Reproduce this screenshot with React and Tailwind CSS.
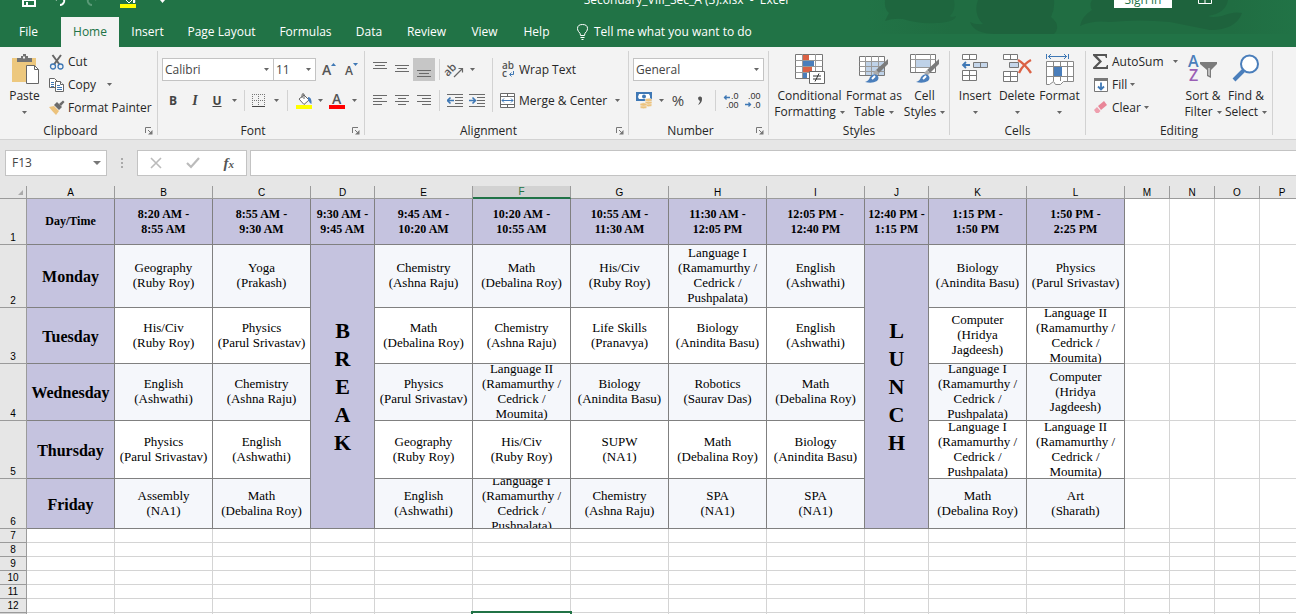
import React, { useState } from 'react';

const TABS = [
  { name: 'File', width: 'w-[61px] pr-1' },
  { name: 'Home', width: 'w-[58px]' },
  { name: 'Insert', width: 'w-[57px]' },
  { name: 'Page Layout', width: 'w-[91px]' },
  { name: 'Formulas', width: 'w-[77px]' },
  { name: 'Data', width: 'w-[50px]' },
  { name: 'Review', width: 'w-[65px]' },
  { name: 'View', width: 'w-[51px]' },
  { name: 'Help', width: 'w-[53px]' },
];

const COLUMNS = [
  { name: 'A', width: 'w-[88px]' },
  { name: 'B', width: 'w-[98px]' },
  { name: 'C', width: 'w-[98px]' },
  { name: 'D', width: 'w-[64px]' },
  { name: 'E', width: 'w-[98px]' },
  { name: 'F', width: 'w-[98px]' },
  { name: 'G', width: 'w-[98px]' },
  { name: 'H', width: 'w-[98px]' },
  { name: 'I', width: 'w-[98px]' },
  { name: 'J', width: 'w-[64px]' },
  { name: 'K', width: 'w-[98px]' },
  { name: 'L', width: 'w-[98px]' },
  { name: 'M', width: 'w-[45px]' },
  { name: 'N', width: 'w-[45px]' },
  { name: 'O', width: 'w-[45px]' },
  { name: 'P', width: 'w-[45px]' },
];

const TIMES = [
  '8:20 AM -\n8:55 AM', '8:55 AM -\n9:30 AM', '9:30 AM -\n9:45 AM', '9:45 AM -\n10:20 AM',
  '10:20 AM -\n10:55 AM', '10:55 AM -\n11:30 AM', '11:30 AM -\n12:05 PM', '12:05 PM -\n12:40 PM',
  '12:40 PM -\n1:15 PM', '1:15 PM -\n1:50 PM', '1:50 PM -\n2:25 PM',
];

const LANG1 = 'Language I\n(Ramamurthy /\nCedrick /\nPushpalata)';
const LANG2 = 'Language II\n(Ramamurthy /\nCedrick /\nMoumita)';
const COMPUTER = 'Computer\n(Hridya\nJagdeesh)';

// morning = B-C, middle = E-I, afternoon = K-L
const DAYS = [
  {
    name: 'Monday', height: 'h-[62px]', color: 'bg-[#f5f7fb]',
    morning: ['Geography\n(Ruby Roy)', 'Yoga\n(Prakash)'],
    middle: ['Chemistry\n(Ashna Raju)', 'Math\n(Debalina Roy)', 'His/Civ\n(Ruby Roy)', LANG1, 'English\n(Ashwathi)'],
    afternoon: ['Biology\n(Anindita Basu)', 'Physics\n(Parul Srivastav)'],
  },
  {
    name: 'Tuesday', height: 'h-[55px]', color: 'bg-white',
    morning: ['His/Civ\n(Ruby Roy)', 'Physics\n(Parul Srivastav)'],
    middle: ['Math\n(Debalina Roy)', 'Chemistry\n(Ashna Raju)', 'Life Skills\n(Pranavya)', 'Biology\n(Anindita Basu)', 'English\n(Ashwathi)'],
    afternoon: [COMPUTER, LANG2],
  },
  {
    name: 'Wednesday', height: 'h-[56px]', color: 'bg-[#f5f7fb]',
    morning: ['English\n(Ashwathi)', 'Chemistry\n(Ashna Raju)'],
    middle: ['Physics\n(Parul Srivastav)', LANG2, 'Biology\n(Anindita Basu)', 'Robotics\n(Saurav Das)', 'Math\n(Debalina Roy)'],
    afternoon: [LANG1, COMPUTER],
  },
  {
    name: 'Thursday', height: 'h-[57px]', color: 'bg-white',
    morning: ['Physics\n(Parul Srivastav)', 'English\n(Ashwathi)'],
    middle: ['Geography\n(Ruby Roy)', 'His/Civ\n(Ruby Roy)', 'SUPW\n(NA1)', 'Math\n(Debalina Roy)', 'Biology\n(Anindita Basu)'],
    afternoon: [LANG1, LANG2],
  },
  {
    name: 'Friday', height: 'h-[49px]', color: 'bg-[#f5f7fb]',
    morning: ['Assembly\n(NA1)', 'Math\n(Debalina Roy)'],
    middle: ['English\n(Ashwathi)', LANG1, 'Chemistry\n(Ashna Raju)', 'SPA\n(NA1)', 'SPA\n(NA1)'],
    afternoon: ['Math\n(Debalina Roy)', 'Art\n(Sharath)'],
  },
];

const EMPTY_ROWS = [7, 8, 9, 10, 11, 12, 13];

/* ---------- small ribbon parts ---------- */

const Caret = () => (
  <svg className="w-[5px] h-[3px] shrink-0" viewBox="0 0 5 3"><path d="M0 0h5L2.5 3z" fill="#666" /></svg>
);

const CaretButton = ({ label, className = 'w-[14px]' }) => (
  <button aria-label={label} className={`h-6 shrink-0 flex items-center justify-center ${className}`}><Caret /></button>
);

const IconButton = ({ label, className = 'w-[22px]', children }) => (
  <button aria-label={label} className={`h-6 shrink-0 flex items-center justify-center ${className}`}>{children}</button>
);

const Divider = ({ className = 'h-[21px]' }) => <div className={`w-px shrink-0 bg-[#d2d2d2] ${className}`}></div>;

const Group = ({ label, width, launcher, children }) => (
  <section className={`flex shrink-0 h-[92px] ${width}`}>
    <div className="flex flex-col flex-1 min-w-0">
      <div className="h-[76px]">{children}</div>
      <div className="h-4 flex items-center">
        <span className={`flex-1 text-center leading-4 ${launcher ? 'pr-1' : ''}`}>{label}</span>
        {launcher && (
          <button aria-label={`${label} settings`} className="w-3">
            <svg className="w-2 h-2" viewBox="0 0 8 8" fill="none" stroke="#777">
              <path d="M.5 6V.5H6M3 3l3 3" />
              <path d="M7.5 3v4.5H3z" fill="#777" stroke="none" />
            </svg>
          </button>
        )}
      </div>
    </div>
    <Divider className="h-[84px] mt-1" />
  </section>
);

const BigButton = ({ icon, lines, width, caretBelow }) => (
  <button className={`flex flex-col items-center shrink-0 pt-[7px] leading-4 ${width}`}>
    <span className="h-[34px]">{icon}</span>
    {lines.map((line, i) => (
      <span key={line} className="flex items-center gap-1 whitespace-nowrap">
        {line}{!caretBelow && i === lines.length - 1 && <Caret />}
      </span>
    ))}
    {caretBelow && <span className="h-4 flex items-center"><Caret /></span>}
  </button>
);

const Lines = ({ d, label, active }) => (
  <button aria-label={label} className={`w-[22px] h-[23px] shrink-0 flex items-center justify-center ${active ? 'bg-[#c6c6c6]' : ''}`}>
    <svg className="w-[14px] h-4" viewBox="0 0 14 16" stroke="#6a6a6a" fill="none"><path d={d} /></svg>
  </button>
);

/* ---------- icons ---------- */

const PasteIcon = () => (
  <svg className="w-[30px] h-[31px]" viewBox="0 0 30 31">
    <path d="M2 4h24v24H2z" fill="#edc87e" />
    <path d="M7 4h4V2h2V0h3v2h2v2h4v4H7z" fill="#737373" />
    <path d="M13 2.5h2v2h-2z" fill="#f3f3f3" />
    <path d="M16.500 11.500h8l4 4v14h-12z" fill="#fff" stroke="#666" />
    <path d="M24.500 11.500v4h4" fill="none" stroke="#666" />
  </svg>
);

const CutIcon = () => (
  <svg className="w-4 h-4" viewBox="0 0 16 16" fill="none">
    <path d="M3.500 1l7 9.500M12 1L5 10.500" stroke="#666" strokeWidth="2" />
    <circle cx="4" cy="12.500" r="2.500" stroke="#3f78b5" strokeWidth="1.300" />
    <circle cx="11.500" cy="12.500" r="2.500" stroke="#3f78b5" strokeWidth="1.300" />
  </svg>
);

const CopyIcon = () => (
  <svg className="w-4 h-4" viewBox="0 0 16 16" fill="#fff" stroke="#666">
    <path d="M.5 1.500h5l3 3v6h-8z" />
    <path d="M2 5.500h3M2 7.500h3M2 9.500h3" stroke="#3f78b5" />
    <path d="M6.500 4.500h5l3 3v7h-8z" />
    <path d="M11.500 4.500v3h3" />
    <path d="M8 8.500h3M8 10.500h5M8 12.500h5" stroke="#3f78b5" />
  </svg>
);

const PainterIcon = () => (
  <svg className="w-4 h-4" viewBox="0 0 16 16">
    <path d="M0 7l5-1 5 5-3 4q-4-4-7-8z" fill="#ecc27c" />
    <path d="M5 5l3-3 5 5-3 3z" fill="#6b6b6b" />
    <path d="M10 4l4-3.500 1.500 1.500L12 6z" fill="#6b6b6b" />
  </svg>
);

const BordersIcon = () => (
  <svg className="w-[14px] h-[14px]" viewBox="0 0 14 14" stroke="#777" fill="none">
    <path d="M.5 0v13M6.500 0v13M12.500 0v13M0 .5h13M0 6.500h13" strokeDasharray="1 1" />
    <path d="M0 12.500h13" stroke="#444" />
  </svg>
);

const FillColorIcon = () => (
  <svg className="w-4 h-4" viewBox="0 0 16 16">
    <path d="M3 6l5-4 5 5-5 4.500z" fill="#fff" stroke="#666" />
    <path d="M6 5V2q0-2 2-1v5" fill="none" stroke="#666" />
    <path d="M12 4q4 0 3.500 7-2-1-3.500-4z" fill="#4a7ebb" />
    <path d="M0 12h16v4H0z" fill="#ffff00" />
  </svg>
);

const OrientationIcon = () => (
  <svg className="w-[17px] h-4 overflow-visible" viewBox="0 0 17 16" fill="none">
    <text x="-3" y="10" fontSize="11" fontWeight="600" fill="#555" transform="rotate(-45 5 8)" className="font-['Open_Sans']">ab</text>
    <path d="M7 15l8-8M11.500 6.500H15.500v4" stroke="#666" strokeWidth="1.200" />
  </svg>
);

const WrapIcon = () => (
  <svg className="w-[14px] h-4 overflow-visible" viewBox="0 0 14 16" fill="none">
    <text x="0" y="7" fontSize="10" fontWeight="600" fill="#555" className="font-['Open_Sans']">ab</text>
    <text x="0" y="15" fontSize="10" fontWeight="600" fill="#555" className="font-['Open_Sans']">c</text>
    <path d="M11.500 9v3.500H8M9.500 10.500l-2 2 2 2" stroke="#3f78b5" />
  </svg>
);

const MergeIcon = () => (
  <svg className="w-4 h-4" viewBox="0 0 16 16" fill="#fff" stroke="#6a6a6a">
    <path d="M.5 .5h14v14H.5zM.5 3.500h14M.5 11.500h14M7.500 .5v3M7.500 11.500v3" />
    <path d="M2 7.500h11M4 5.500l-2 2 2 2M11 5.500l2 2-2 2" stroke="#3f78b5" fill="none" />
  </svg>
);

const IndentIcon = ({ right }) => (
  <svg className="w-4 h-4" viewBox="0 0 16 16" fill="none" stroke="#6a6a6a">
    <path d="M0 1.500h16M8 4.500h8M8 7.500h8M8 10.500h8M0 13.500h16" />
    <path d={right ? 'M0 7.500h6M3.500 4.500l3 3-3 3' : 'M7 7.500H1M3.500 4.500l-3 3 3 3'} stroke="#3f78b5" strokeWidth="1.600" />
  </svg>
);

const CurrencyIcon = () => (
  <svg className="w-[17px] h-[17px]" viewBox="0 0 17 17">
    <path d="M0 0h16v9H0z" fill="#3f78b5" />
    <path d="M3 2h10l1 2v2l-1 1H3L2 5z" fill="#fff" />
    <circle cx="8" cy="4.500" r="2" fill="#3f78b5" />
    <g fill="#ecc27c" stroke="#f3f3f3" strokeWidth=".5">
      <ellipse cx="12.500" cy="13" rx="3.500" ry="1.700" />
      <ellipse cx="12.500" cy="10.500" rx="3.500" ry="1.700" />
      <ellipse cx="12.500" cy="8" rx="3.500" ry="1.700" />
      <ellipse cx="7.500" cy="15" rx="3.500" ry="1.700" />
      <ellipse cx="7.500" cy="12.500" rx="3.500" ry="1.700" />
    </g>
  </svg>
);

const DecimalIcon = ({ less }) => (
  <svg className="w-4 h-4 overflow-visible" viewBox="0 0 16 16" fill="none">
    <text x={less ? 3 : 8} y="6" fontSize="9" fill="#333" className="font-['Liberation_Sans']">{less ? '.00' : '.0'}</text>
    <text x={less ? 8 : 3} y="15" fontSize="9" fill="#333" className="font-['Liberation_Sans']">{less ? '.0' : '.00'}</text>
    <path d={less ? 'M0 11.500h6M3.500 9.500l2 2-2 2' : 'M7 4.500H1M3.500 2.500l-2 2 2 2'} stroke="#3f78b5" strokeWidth="1.300" />
  </svg>
);

const ConditionalIcon = () => (
  <svg className="w-[30px] h-[31px]" viewBox="0 0 30 31">
    <path d="M.5 .5h27v24H.5z" fill="#fff" stroke="#777" />
    <path d="M.5 6.500h27M.5 12.500h27M.5 18.500h27M7.500 0v24M20.500 0v24" stroke="#999" fill="none" />
    <path d="M8 1h6v5H8zM8 13h9v5H8z" fill="#db6245" />
    <path d="M8 7h11v5H8zM8 19h4v5H8z" fill="#4a7ebb" />
    <path d="M14.500 17.500h15v12h-15z" fill="#fff" stroke="#666" />
    <path d="M18 22h8M18 25h8M24 19.500l-4 8" stroke="#333" fill="none" />
  </svg>
);

const Brush = () => (
  <g>
    <path d="M29 5v5l-9 9-3-3z" fill="#7b7b7b" />
    <path d="M17 16l3 3-3 3-3-3z" fill="#aaa" />
    <path d="M6 28q4-1 5-5 3-4 7-2 3 3 0 6-5 3-12 1z" fill="#4a7ebb" />
    <path d="M13 25l3-3" stroke="#fff" strokeWidth="2" />
  </g>
);

const FormatTableIcon = () => (
  <svg className="w-[30px] h-[30px]" viewBox="0 0 30 30">
    <path d="M.5 2.500h25v19H.5z" fill="#fff" stroke="#777" />
    <path d="M7 8h18v13H7z" fill="#bfd2e8" />
    <path d="M.5 7.500h25M.5 12.500h25M.5 17.500h25M6.500 2v19M12.500 2v19M19.500 2v19" stroke="#999" fill="none" />
    <Brush />
  </svg>
);

const CellStylesIcon = () => (
  <svg className="w-[30px] h-[30px]" viewBox="0 0 30 30">
    <path d="M.5 .5h25v18H.5z" fill="#fff" stroke="#777" />
    <path d="M.5 5.500h25M.5 13.500h25M5.500 0v18M20.500 0v18" stroke="#999" fill="none" />
    <path d="M6 6h14v7H6z" fill="#bfd2e8" />
    <Brush />
  </svg>
);

const InsertIcon = () => (
  <svg className="w-[28px] h-[30px]" viewBox="0 0 28 30" fill="#fff" stroke="#777">
    <path d="M1.500 .5h14v5h-14zM8.500 .5v5M1.500 16.500h14v10h-14zM1.500 21.500h14M8.500 16.500v10" />
    <path d="M12.500 8.500h14v5h-14zM19.500 8.500v5" fill="#c5d6ea" />
    <path d="M9 11H2M5 8l-3 3 3 3" fill="none" stroke="#3f78b5" strokeWidth="1.800" />
  </svg>
);

const DeleteIcon = () => (
  <svg className="w-[30px] h-[30px]" viewBox="0 0 30 30" fill="#fff" stroke="#777">
    <path d="M1.500 .5h14v5h-14zM8.500 .5v5M1.500 17.500h14v10h-14zM1.500 22.500h14M8.500 17.500v10" />
    <path d="M7.500 8.500h9v5h-9z" fill="#c5d6ea" />
    <path d="M16 6q7 4 13 13M29 6q-8 4-12 13" fill="none" stroke="#db6245" strokeWidth="2.400" />
  </svg>
);

const FormatIcon = () => (
  <svg className="w-[30px] h-[32px]" viewBox="0 0 30 32" fill="#fff" stroke="#888">
    <path d="M1.500 7.500h27v20h-10l-3 3h-5l-2-3-4 3h-3z" />
    <path d="M1.500 12.500h27M1.500 22.500h27M8.500 7v20M15.500 7v20M22.500 7v20" fill="none" />
    <path d="M9 13h8v9H9z" fill="#4a7ebb" stroke="none" />
    <path d="M1.500 0v5M23.500 0v5M3 2.500h19M6 0L3.500 2.500 6 5M19 0l2.500 2.500L19 5" fill="none" stroke="#3f78b5" />
  </svg>
);

const SigmaIcon = () => (
  <svg className="w-4 h-4" viewBox="0 0 16 16"><path d="M0 0h14v4h-1l-1-2H4l5 5.500L3.500 13H13l1-2h1v4H0v-1.500L6 7.500 0 1.500z" fill="#555" /></svg>
);

const FillIcon = () => (
  <svg className="w-4 h-4" viewBox="0 0 16 16" fill="none">
    <path d="M1.500 1.500h13v13h-13z" fill="#fff" stroke="#777" />
    <path d="M1 1h14v3H1z" fill="#777" />
    <path d="M8 5.500v7M5 9.500l3 3 3-3" stroke="#3f78b5" strokeWidth="1.800" />
  </svg>
);

const ClearIcon = () => (
  <svg className="w-4 h-4" viewBox="0 0 16 16">
    <path d="M5 6l6-5 3 4-6 5z" fill="#e98698" />
    <path d="M4 7l3.500 4-2 2H3L1 10z" fill="#ee9fae" />
  </svg>
);

const SortIcon = () => (
  <svg className="w-[30px] h-[30px] overflow-visible" viewBox="0 0 30 30">
    <text x="0" y="13" fontSize="16" fontWeight="600" fill="#4a7ebb" className="font-['Open_Sans']">A</text>
    <text x="1" y="27" fontSize="16" fontWeight="600" fill="#9a5fb5" className="font-['Open_Sans']">Z</text>
    <path d="M12 8h17v2l-6 6v8l-4-2v-6l-7-6z" fill="#7b7b7b" />
    <path d="M20.500 14v7l1 1v-8z" fill="#fff" />
  </svg>
);

const FindIcon = () => (
  <svg className="w-[28px] h-[30px]" viewBox="0 0 28 30" fill="none" stroke="#4a7ebb">
    <circle cx="17.500" cy="10" r="8.500" strokeWidth="2" fill="#fff" />
    <path d="M11.500 16.500L2 26" strokeWidth="4" />
  </svg>
);

/* ---------- sheet cells ---------- */

const HeadCell = ({ text }) => (
  <th className="p-0 border-r border-b border-[#808080] bg-[#c5c3df] font-bold text-[12px] leading-[15px] whitespace-pre">{text}</th>
);

const BodyCell = ({ text, height, color }) => (
  <td className={`p-0 border-r border-b border-[#808080] ${color}`}>
    <div className={`flex items-center justify-center overflow-hidden pb-[2px] text-center text-[13px] leading-[15px] whitespace-pre ${height}`}>{text}</div>
  </td>
);

const VerticalCell = ({ word }) => (
  <td rowSpan={5} className="p-0 border-r border-b border-[#808080] bg-[#c5c3df] text-center font-bold text-[22px] leading-[28px] whitespace-pre">
    {word.split('').join('\n')}
  </td>
);

const RowNumber = ({ n, selected }) => (
  <th className={`p-0 border-r border-b border-[#9b9b9b] font-normal text-[10px] leading-[13px] align-bottom text-center font-['Liberation_Sans',sans-serif] ${selected ? 'bg-[#d2d2d2]' : 'bg-[#e6e6e6]'}`}>{n}</th>
);

const BlankCells = ({ names }) => names.map((name) => <td key={name} className="p-0 border-r border-b border-[#d4d4d4]"></td>);

function Sheet() {
  return (
    <table className="table-fixed w-0 border-separate border-spacing-0 text-black font-['Liberation_Serif',serif]">
      <colgroup>
        <col className="w-[27px]" />
        {COLUMNS.map((c) => <col key={c.name} className={c.width} />)}
      </colgroup>
      <thead>
        <tr className="h-[13px] font-['Liberation_Sans',sans-serif] text-[10px] leading-[11px]">
          <th className="p-0 bg-[#e6e6e6] border-r border-b border-[#9b9b9b]">
            <svg className="w-[5px] h-[5px] ml-[18px]" viewBox="0 0 5 5"><path d="M5 0v5H0z" fill="#aaa" /></svg>
          </th>
          {COLUMNS.map((c) => (
            <th
              key={c.name}
              className={`p-0 h-[13px] border-r font-normal ${c.name === 'F' ? 'bg-[#d2d2d2] text-[#217346] border-b-2 border-b-[#217346] border-r-[#9b9b9b]' : 'bg-[#e6e6e6] border-b border-[#9b9b9b]'}`}
            >{c.name}</th>
          ))}
        </tr>
      </thead>
      <tbody>
        <tr className="h-[46px]">
          <RowNumber n={1} />
          <HeadCell text="Day/Time" />
          {TIMES.map((t) => <HeadCell key={t} text={t} />)}
          <BlankCells names={['M', 'N', 'O', 'P']} />
        </tr>
        {DAYS.map((day, i) => (
          <tr key={day.name}>
            <RowNumber n={i + 2} />
            <th className="p-0 pt-[2px] border-r border-b border-[#808080] bg-[#c5c3df] font-bold text-[16px] leading-5">{day.name}</th>
            {day.morning.map((t, k) => <BodyCell key={k} text={t} height={day.height} color={day.color} />)}
            {i === 0 && <VerticalCell word="BREAK" />}
            {day.middle.map((t, k) => <BodyCell key={k} text={t} height={day.height} color={day.color} />)}
            {i === 0 && <VerticalCell word="LUNCH" />}
            {day.afternoon.map((t, k) => <BodyCell key={k} text={t} height={day.height} color={day.color} />)}
            <BlankCells names={['M', 'N', 'O', 'P']} />
          </tr>
        ))}
        {EMPTY_ROWS.map((n) => (
          <tr key={n} className="h-[14px]">
            <RowNumber n={n} selected={n === 13} />
            {COLUMNS.map((c) => (
              <td key={c.name} className="relative p-0 border-r border-b border-[#d4d4d4]">
                {n === 13 && c.name === 'F' && <span className="absolute -top-[2px] -left-[2px] -right-[2px] -bottom-[2px] border-2 border-[#217346]"></span>}
              </td>
            ))}
          </tr>
        ))}
      </tbody>
    </table>
  );
}

/* ---------- header ---------- */

function TitleBar() {
  return (
    <div className="relative h-[17px] flex items-end overflow-hidden">
      <div className="w-full h-[35px] shrink-0 flex items-center justify-between">
        <div className="w-[476px] flex items-center pl-[22px]">
          <button aria-label="Save" className="w-[14px]">
            <svg className="w-[14px] h-[15px]" viewBox="0 0 14 15"><path d="M0 0h14v15H0z" fill="#fff" /><path d="M2 9h10v4H2zM3 0h8v5H3z" fill="#217346" /><path d="M4 10h2v3H4z" fill="#fff" /></svg>
          </button>
          <button aria-label="Undo" className="ml-4">
            <svg className="w-[14px] h-3" viewBox="0 0 14 12" fill="none" stroke="#fff" strokeWidth="2"><path d="M2 3h7q4 1 3 5-1 3-4 3M5 0L2 3l3 3" /></svg>
          </button>
          <button aria-label="Redo" className="ml-5">
            <svg className="w-[14px] h-3" viewBox="0 0 14 12" fill="none" stroke="#5a9a77" strokeWidth="2"><path d="M12 3H5Q1 4 2 8q1 3 4 3M9 0l3 3-3 3" /></svg>
          </button>
          <button aria-label="Highlight" className="ml-5">
            <svg className="w-4 h-[17px]" viewBox="0 0 16 17"><path d="M3 6l5-5 6 6-5 5z" fill="none" stroke="#fff" /><path d="M0 13h16v4H0z" fill="#ffff00" /><path d="M13 6q3 2 2 6h-2z" fill="#fff" /></svg>
          </button>
          <button aria-label="Customize toolbar" className="ml-6">
            <svg className="w-[5px] h-[7px]" viewBox="0 0 5 7"><path d="M0 4h5L2.500 7z" fill="#fff" /></svg>
          </button>
        </div>
        <h1 className="whitespace-pre leading-4">Secondary_VIII_Sec_A (3).xlsx  -  Excel</h1>
        <div className="w-[400px] flex items-center justify-end">
          <button className="w-[58px] h-[17px] leading-4 bg-white text-[#217346]">Sign in</button>
          <button aria-label="Ribbon display options" className="ml-[26px] mr-[84px]">
            <svg className="w-[14px] h-2" viewBox="0 0 14 8" fill="none" stroke="#fff"><path d="M.5 .5h13v7H.5zM7 0v8M0 3.500h14" /></svg>
          </button>
        </div>
      </div>
    </div>
  );
}

export default function App() {
  const [tab, setTab] = useState('Home');
  const [cell, setCell] = useState('F13');
  const [formula, setFormula] = useState('');

  return (
    <div className="h-screen w-full overflow-hidden flex flex-col bg-white text-[12px] text-[#262626] font-['Open_Sans','Noto_Sans',sans-serif]">
      <header className="relative shrink-0 bg-[#217346] text-white">
        <svg className="absolute right-0 top-0 w-[520px] h-[34px]" viewBox="0 0 520 34">
          <defs>
            <linearGradient id="shade">
              <stop offset="0" stopColor="#206d42" stopOpacity="0" />
              <stop offset=".2" stopColor="#206d42" />
              <stop offset=".85" stopColor="#206d42" />
              <stop offset="1" stopColor="#206d42" stopOpacity="0" />
            </linearGradient>
          </defs>
          <path d="M90 0h430v34H90z" fill="url(#shade)" />
          <path d="M109 0q-1 9 4 13l-4 8q8-3 18-2 14 5 34 4 18-1 19-7-5 2-6 0 6-6 4-16z" fill="#1e663e" />
          <path d="M202 0q-5 14 5 24-8 1-13-2 4 12 26 12h58q4-4 3-8 0-4-6-9 4-8 3-17z" fill="#1e633d" />
          <path d="M316 0q-3 5 0 10-10 6-12 16 12-6 30-4 30-3 60 0 20 4 40 8 26 0 32-17-8-2-20 3-10 2-14 0 18-3 20-16z" fill="#1e633d" />
        </svg>
        <div className="relative">
          <TitleBar />
          <nav className="flex h-[30px]">
            {TABS.map((t) => (
              <button
                key={t.name}
                onClick={() => setTab(t.name)}
                className={`shrink-0 text-center whitespace-nowrap ${t.width} ${tab === t.name ? 'bg-[#f3f3f3] text-[#217346]' : ''}`}
              >{t.name}</button>
            ))}
            <button className="flex items-center gap-[6px] pl-[14px] whitespace-nowrap">
              <svg className="w-[11px] h-4 shrink-0" viewBox="0 0 11 16" fill="none" stroke="#fff"><path d="M3.500 11.500Q3.500 9 1.500 7.500.5 6 .5 4.500.5 .5 5.500 .5t5 4q0 1.500-1 3Q7.500 9 7.500 11.500zM3.500 13.500h4M4.500 15.500h2" /></svg>
              <span>Tell me what you want to do</span>
            </button>
          </nav>
        </div>
      </header>

      <div className="shrink-0 flex bg-[#f3f3f3] border-b border-[#d2d2d2]">
        <Group label="Clipboard" width="w-[158px]" launcher>
          <div className="flex">
            <BigButton icon={<PasteIcon />} lines={['Paste']} width="w-[49px]" caretBelow />
            <div className="flex flex-col pt-[3px]">
              <button className="h-[23px] flex items-center gap-[3px]"><CutIcon />Cut</button>
              <button className="h-[23px] flex items-center gap-[3px]"><CopyIcon />Copy<span className="pl-2"><Caret /></span></button>
              <button className="h-[23px] flex items-center gap-[3px] whitespace-nowrap"><PainterIcon />Format Painter</button>
            </div>
          </div>
        </Group>

        <Group label="Font" width="w-[207px]" launcher>
          <div className="flex flex-col gap-2 pl-1 pt-[11px]">
            <div className="flex items-center h-[23px]">
              <div className="relative w-[112px]">
                <select aria-label="Font" className="w-full h-[23px] pl-[2px] appearance-none bg-white border border-[#c3c3c3] text-[#444]"><option>Calibri</option></select>
                <span className="absolute right-[5px] top-[10px] flex"><Caret /></span>
              </div>
              <div className="relative w-[43px] -ml-px">
                <select aria-label="Font size" className="w-full h-[23px] pl-[2px] appearance-none bg-white border border-[#c3c3c3] text-[#444]"><option>11</option></select>
                <span className="absolute right-[5px] top-[10px] flex"><Caret /></span>
              </div>
              <IconButton label="Increase font size" className="w-[24px]">
                <svg className="w-4 h-4 overflow-visible" viewBox="0 0 16 16"><text x="2" y="13" fontSize="14" fontWeight="600" fill="#555" className="font-['Open_Sans']">A</text><path d="M11 4h5l-2.500-3z" fill="#3f78b5" /></svg>
              </IconButton>
              <IconButton label="Decrease font size">
                <svg className="w-4 h-4 overflow-visible" viewBox="0 0 16 16"><text x="2" y="13" fontSize="12" fontWeight="600" fill="#555" className="font-['Open_Sans']">A</text><path d="M10 1h5l-2.500 3z" fill="#3f78b5" /></svg>
              </IconButton>
            </div>
            <div className="flex items-center h-[23px] text-[#444]">
              <IconButton label="Bold"><b>B</b></IconButton>
              <IconButton label="Italic"><i className="font-semibold font-['Liberation_Serif'] text-[14px]">I</i></IconButton>
              <IconButton label="Underline"><b className="underline">U</b></IconButton>
              <CaretButton label="Underline styles" className="w-[16px] pr-1" />
              <Divider />
              <IconButton label="Borders" className="w-[28px]"><BordersIcon /></IconButton>
              <CaretButton label="Border styles" className="w-[14px] pr-2" />
              <Divider />
              <IconButton label="Fill color" className="w-[24px] ml-1"><FillColorIcon /></IconButton>
              <CaretButton label="Fill colors" className="w-[8px]" />
              <IconButton label="Font color" className="w-[26px]">
                <svg className="w-4 h-4 overflow-visible" viewBox="0 0 16 16"><text x="3" y="11" fontSize="14" fontWeight="600" fill="#555" className="font-['Open_Sans']">A</text><path d="M0 12h16v4H0z" fill="#f00" /></svg>
              </IconButton>
              <CaretButton label="Font colors" className="w-[8px]" />
            </div>
          </div>
        </Group>

        <Group label="Alignment" width="w-[264px]" launcher>
          <div className="flex pl-1 pt-[11px]">
            <div className="flex flex-col gap-2 w-[123px]">
              <div className="flex items-center h-[23px]">
                <Lines label="Top align" d="M0 .5h14M2 3.500h10M0 6.500h14" />
                <Lines label="Middle align" d="M0 3.500h14M2 6.500h10M0 9.500h14" />
                <Lines label="Bottom align" active d="M0 8.500h14M2 11.500h10M0 14.500h14" />
                <div className="w-1"></div>
                <Divider />
                <IconButton label="Orientation" className="w-[30px]"><OrientationIcon /></IconButton>
                <CaretButton label="Orientation options" className="w-[5px]" />
              </div>
              <div className="flex items-center h-[23px]">
                <Lines label="Align left" d="M0 2.500h14M0 5.500h9M0 8.500h14M0 11.500h9" />
                <Lines label="Center" d="M0 2.500h14M3 5.500h8M0 8.500h14M3 11.500h8" />
                <Lines label="Align right" d="M0 2.500h14M5 5.500h9M0 8.500h14M5 11.500h9" />
                <div className="w-1"></div>
                <Divider />
                <div className="w-1"></div>
                <IconButton label="Decrease indent"><IndentIcon /></IconButton>
                <IconButton label="Increase indent"><IndentIcon right /></IconButton>
              </div>
            </div>
            <Divider className="h-[54px]" />
            <div className="flex flex-col gap-2 pl-[7px]">
              <button className="h-[23px] flex items-center gap-[3px]"><span className="w-4 pl-[2px]"><WrapIcon /></span>Wrap Text</button>
              <div className="h-[23px] flex items-center">
                <button className="flex items-center gap-[3px] whitespace-nowrap"><MergeIcon />Merge &amp; Center</button>
                <CaretButton label="Merge options" className="w-[20px]" />
              </div>
            </div>
          </div>
        </Group>

        <Group label="Number" width="w-[140px]" launcher>
          <div className="flex flex-col gap-2 pl-1 pt-[11px]">
            <div className="relative w-[131px] h-[23px]">
              <select aria-label="Number format" className="w-full h-[23px] pl-[2px] appearance-none bg-white border border-[#c3c3c3] text-[#444]"><option>General</option></select>
              <span className="absolute right-[5px] top-[10px] flex"><Caret /></span>
            </div>
            <div className="flex items-center h-[23px] text-[#444]">
              <IconButton label="Accounting format"><CurrencyIcon /></IconButton>
              <CaretButton label="Accounting options" className="w-3" />
              <IconButton label="Percent style"><span className="text-[15px]">%</span></IconButton>
              <IconButton label="Comma style">
                <svg className="w-[6px] h-[9px]" viewBox="0 0 6 9"><path d="M1 2a2 2 0 1 1 4 1Q5 7 1 9 3 6 3 5 1 4 1 2z" fill="#555" /></svg>
              </IconButton>
              <div className="w-[4px]"></div>
              <Divider />
              <div className="w-1"></div>
              <IconButton label="Increase decimal"><DecimalIcon /></IconButton>
              <IconButton label="Decrease decimal"><DecimalIcon less /></IconButton>
            </div>
          </div>
        </Group>

        <Group label="Styles" width="w-[181px]">
          <div className="flex pl-[6px]">
            <BigButton icon={<ConditionalIcon />} lines={['Conditional', 'Formatting']} width="w-[69px]" />
            <BigButton icon={<FormatTableIcon />} lines={['Format as', 'Table']} width="w-[60px]" />
            <BigButton icon={<CellStylesIcon />} lines={['Cell', 'Styles']} width="w-[41px]" />
          </div>
        </Group>

        <Group label="Cells" width="w-[136px]">
          <div className="flex pl-1">
            <BigButton icon={<InsertIcon />} lines={['Insert']} width="w-[42px]" caretBelow />
            <BigButton icon={<DeleteIcon />} lines={['Delete']} width="w-[42px]" caretBelow />
            <BigButton icon={<FormatIcon />} lines={['Format']} width="w-[43px]" caretBelow />
          </div>
        </Group>

        <Group label="Editing" width="w-[187px]">
          <div className="flex pl-[7px]">
            <div className="flex flex-col pt-[3px] w-[88px]">
              <button className="h-[23px] flex items-center gap-[3px]"><SigmaIcon />AutoSum<span className="pl-[6px]"><Caret /></span></button>
              <button className="h-[23px] flex items-center gap-[3px]"><FillIcon />Fill<Caret /></button>
              <button className="h-[23px] flex items-center gap-[3px]"><ClearIcon />Clear<Caret /></button>
            </div>
            <BigButton icon={<SortIcon />} lines={['Sort &', 'Filter']} width="w-[44px]" />
            <BigButton icon={<FindIcon />} lines={['Find &', 'Select']} width="w-[42px]" />
          </div>
        </Group>
      </div>

      <div className="shrink-0 flex h-[46px] py-[10px] pl-[5px] bg-[#e6e6e6]">
        <div className="flex w-[102px] bg-white border border-[#c3c3c3]">
          <input aria-label="Name box" value={cell} onChange={(e) => setCell(e.target.value)} className="flex-1 min-w-0 pl-[6px] text-[#444] outline-none" />
          <button aria-label="Named cells" className="w-[18px] flex items-center justify-center">
            <svg className="w-2 h-1" viewBox="0 0 8 4"><path d="M0 0h8L4 4z" fill="#777" /></svg>
          </button>
        </div>
        <div className="w-[30px] flex items-center justify-center">
          <svg className="w-[2px] h-[10px]" viewBox="0 0 2 10"><path d="M0 0h2v2H0zM0 4h2v2H0zM0 8h2v2H0z" fill="#aaa" /></svg>
        </div>
        <div className="w-[110px] flex items-center justify-around bg-white border border-[#c3c3c3]">
          <button aria-label="Cancel"><svg className="w-3 h-3" viewBox="0 0 12 12"><path d="M1 1l10 10M11 1L1 11" stroke="#bbb" strokeWidth="1.600" /></svg></button>
          <button aria-label="Enter"><svg className="w-[14px] h-3" viewBox="0 0 14 12" fill="none"><path d="M1 6l4 4 8-9" stroke="#bbb" strokeWidth="2.200" /></svg></button>
          <button aria-label="Insert function" className="font-['Liberation_Serif'] italic font-bold text-[15px] leading-4 text-[#555]">f<span className="text-[11px]">x</span></button>
        </div>
        <input aria-label="Formula" value={formula} onChange={(e) => setFormula(e.target.value)} className="flex-1 min-w-0 ml-[3px] px-1 bg-white border border-r-0 border-[#c3c3c3] outline-none" />
      </div>

      <main className="flex-1 min-h-0 overflow-hidden">
        <Sheet />
      </main>
    </div>
  );
}
